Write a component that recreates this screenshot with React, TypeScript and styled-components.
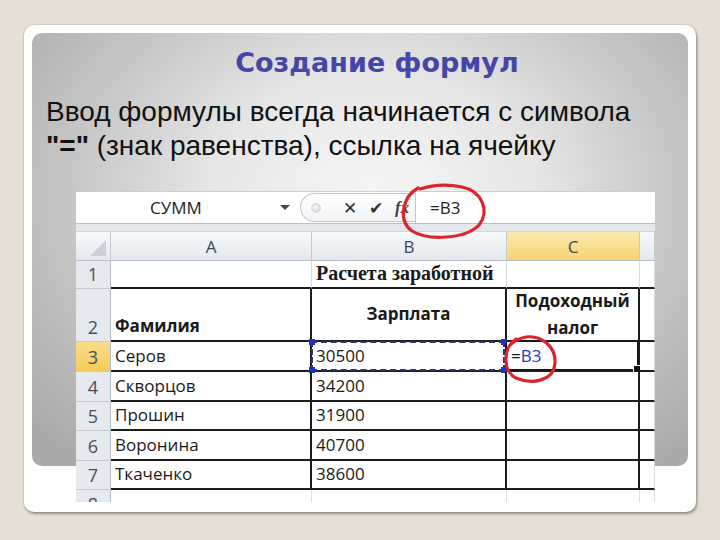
import React from 'react';
import styled, { createGlobalStyle } from 'styled-components';

const GlobalStyle = createGlobalStyle`
  html, body { margin: 0; padding: 0; }
  body {
    background: #e5dfd5;
    width: 720px;
    height: 540px;
    overflow: hidden;
    font-family: "Liberation Sans", Arial, sans-serif;
  }
`;

const Card = styled.div`
  box-sizing: border-box;
  margin: 25px 0 0 24px;
  width: 672px;
  height: 487px;
  padding: 8px;
  background: #ffffff;
  border-radius: 10px;
  box-shadow: 1px 2px 3px rgba(0, 0, 0, 0.35), 0 0 0 1px rgba(0, 0, 0, 0.06);
`;

const Panel = styled.div`
  box-sizing: border-box;
  height: 433px;
  padding: 13px 14px 0 14px;
  border-radius: 10px;
  background: radial-gradient(ellipse 70% 80% at 52% 38%, #f6f6f6 0%, #e6e6e6 35%, #c2c2c2 70%, #a9a9a9 100%);
  display: flex;
  flex-direction: column;
`;

const Title = styled.h1`
  margin: 0;
  padding-left: 34px;
  text-align: center;
  font-family: "DejaVu Sans", Verdana, sans-serif;
  font-weight: bold;
  font-size: 27px;
  line-height: 33px;
  color: #4646a8;
`;

const Lead = styled.p`
  margin: 16px 0 0 0;
  font-family: "Liberation Sans", Arial, sans-serif;
  font-size: 28px;
  line-height: 34px;
  white-space: nowrap;
  color: #111111;
  b { font-weight: bold; }
`;

const Sheet = styled.div`
  position: relative;
  margin: 28px 0 0 30px;
  width: 579px;
  height: 311px;
  background: #ffffff;
  font-family: "Open Sans", "Noto Sans", sans-serif;
  font-size: 17px;
  color: #1a1a1a;
`;

const Clip = styled.div`
  width: 100%;
  height: 100%;
  overflow: hidden;
`;

const FormulaBar = styled.div`
  display: flex;
  height: 33px;
  box-sizing: border-box;
  border-top: 1px solid #c9ced6;
  border-bottom: 1px solid #b9bfc8;
  background: #ffffff;
`;

const NameBox = styled.div`
  position: relative;
  width: 224px;
  display: flex;
  align-items: center;
  justify-content: center;
  padding-right: 24px;
  box-sizing: border-box;
  color: #222;
`;

const DropArrow = styled.span`
  position: absolute;
  right: 10px;
  top: 13px;
  border-left: 5px solid transparent;
  border-right: 5px solid transparent;
  border-top: 5px solid #444;
`;

const Tools = styled.div`
  width: 115px;
  box-sizing: border-box;
  display: flex;
  align-items: center;
  gap: 12px;
  padding-left: 10px;
  border: 1px solid #c3c8d0;
  border-right: none;
  border-radius: 16px 0 0 16px;
  margin: 1px 0;
  background: linear-gradient(#ffffff, #f1f2f4);
  color: #333;
`;

const Knob = styled.span`
  width: 8px;
  height: 8px;
  border-radius: 50%;
  background: radial-gradient(circle at 40% 40%, #fafafa, #c9ccd1);
  border: 1px solid #d4d7dc;
  margin-right: 10px;
`;

const Fx = styled.span`
  font-family: "Liberation Serif", serif;
  font-style: italic;
  font-weight: bold;
  font-size: 17px;
  color: #444;
`;

const FormulaInput = styled.div`
  flex: 1;
  display: flex;
  align-items: center;
  padding-left: 14px;
  border-left: 1px solid #c3c8d0;
  color: #222;
`;

const Strip = styled.div`
  height: 8px;
  background: #e4e7eb;
  border-bottom: 1px solid #cfd4db;
  box-sizing: border-box;
`;

const Grid = styled.div`
  display: grid;
  grid-template-columns: 35px 201px 195px 133px 15px;
  grid-template-rows: 29px 28px 53px 30px 30px 29px 30px 29px 29px;
`;

const HeadCell = styled.div<{ $active?: boolean }>`
  box-sizing: border-box;
  display: flex;
  align-items: center;
  justify-content: center;
  border-right: 1px solid #c5cad2;
  border-bottom: 1px solid #b7bdc6;
  background: ${({ $active }) =>
    $active ? 'linear-gradient(#fbeab0, #f6d46e)' : 'linear-gradient(#f7f8fa, #e4e8ee)'};
  color: #3c4656;
  font-size: 17px;
`;

const Corner = styled(HeadCell)`
  position: relative;
  &::after {
    content: '';
    position: absolute;
    right: 4px;
    bottom: 4px;
    border-left: 16px solid transparent;
    border-bottom: 16px solid #cdd1d7;
  }
`;

const RowNum = styled.div<{ $active?: boolean }>`
  box-sizing: border-box;
  display: flex;
  align-items: flex-end;
  justify-content: center;
  padding-bottom: 2px;
  border-right: 1px solid #b7bdc6;
  border-bottom: 1px solid #c5cad2;
  background: ${({ $active }) => ($active ? 'linear-gradient(#f9dd8a, #f4c95a)' : '#e6e9ee')};
  color: #4a4f57;
  font-size: 18px;
`;

const Cell = styled.div<{
  $right?: boolean;
  $bottom?: boolean;
  $bold?: boolean;
  $center?: boolean;
  $middle?: boolean;
  $serif?: boolean;
}>`
  position: relative;
  box-sizing: border-box;
  display: flex;
  align-items: ${({ $middle }) => ($middle ? 'center' : 'flex-end')};
  justify-content: ${({ $center }) => ($center ? 'center' : 'flex-start')};
  text-align: ${({ $center }) => ($center ? 'center' : 'left')};
  padding: 0 4px 1px 4px;
  border-right: ${({ $right }) => ($right ? '2px solid #1c1c1c' : '1px solid #dadcdf')};
  border-bottom: ${({ $bottom }) => ($bottom ? '2px solid #1c1c1c' : '1px solid #dadcdf')};
  font-weight: ${({ $bold }) => ($bold ? 'bold' : 'normal')};
  font-family: ${({ $serif }) => ($serif ? '"Liberation Serif", "Times New Roman", serif' : 'inherit')};
  font-size: ${({ $serif }) => ($serif ? '20px' : '17px')};
  line-height: 26px;
  white-space: nowrap;
`;

const WrapText = styled.span`
  white-space: normal;
  line-height: 27px;
`;

const Ants = styled.div`
  position: absolute;
  inset: -1px 0 -1px -1px;
  border: 2px dashed #2a3378;
  pointer-events: none;
`;

const Dot = styled.span<{ $x: 'left' | 'right'; $y: 'top' | 'bottom' }>`
  position: absolute;
  ${({ $x }) => $x}: -4px;
  ${({ $y }) => $y}: -4px;
  width: 6px;
  height: 6px;
  background: #2030c0;
`;

const Active = styled.div`
  position: absolute;
  inset: -1px 0 0 -1px;
  border: 1px solid #111;
  pointer-events: none;
`;

const Handle = styled.span`
  position: absolute;
  right: -4px;
  bottom: -4px;
  width: 6px;
  height: 6px;
  background: #111;
  border: 1px solid #fff;
`;

const Ref = styled.span`
  color: #2a32c8;
`;

const Marks = styled.svg`
  position: absolute;
  left: 0;
  top: 0;
  overflow: visible;
  pointer-events: none;
`;

const rows = [
  ['4', 'Скворцов', '34200'],
  ['5', 'Прошин', '31900'],
  ['6', 'Воронина', '40700'],
  ['7', 'Ткаченко', '38600'],
];

export default function App() {
  return (
    <>
      <GlobalStyle />
      <Card>
        <Panel>
          <Title>Создание формул</Title>
          <Lead>
            Ввод формулы всегда начинается с символа
            <br />
            <b>"="</b> (знак равенства), ссылка на ячейку
          </Lead>
          <Sheet>
            <Clip>
              <FormulaBar>
                <NameBox>
                  СУММ
                  <DropArrow />
                </NameBox>
                <Tools>
                  <Knob />
                  <span>✕</span>
                  <span>✔</span>
                  <Fx>fx</Fx>
                </Tools>
                <FormulaInput>=B3</FormulaInput>
              </FormulaBar>
              <Strip />
              <Grid>
                <Corner />
                <HeadCell>A</HeadCell>
                <HeadCell>B</HeadCell>
                <HeadCell $active>C</HeadCell>
                <HeadCell />

                <RowNum>1</RowNum>
                <Cell $bottom />
                <Cell $bottom $bold $serif>
                  Расчета заработной
                </Cell>
                <Cell $bottom />
                <Cell $bottom />

                <RowNum>2</RowNum>
                <Cell $right $bottom $bold>
                  Фамилия
                </Cell>
                <Cell $right $bottom $bold $center $middle>
                  Зарплата
                </Cell>
                <Cell $right $bottom $bold $center $middle>
                  <WrapText>Подоходный налог</WrapText>
                </Cell>
                <Cell $bottom />

                <RowNum $active>3</RowNum>
                <Cell $right $bottom>
                  Серов
                </Cell>
                <Cell $right $bottom>
                  30500
                  <Ants>
                    <Dot $x="left" $y="top" />
                    <Dot $x="left" $y="bottom" />
                    <Dot $x="right" $y="top" />
                    <Dot $x="right" $y="bottom" />
                  </Ants>
                </Cell>
                <Cell $right $bottom>
                  =<Ref>B3</Ref>
                  <Active>
                    <Handle />
                  </Active>
                </Cell>
                <Cell $bottom />

                {rows.map(([n, name, pay]) => (
                  <React.Fragment key={n}>
                    <RowNum>{n}</RowNum>
                    <Cell $right $bottom>
                      {name}
                    </Cell>
                    <Cell $right $bottom>
                      {pay}
                    </Cell>
                    <Cell $right $bottom />
                    <Cell $bottom />
                  </React.Fragment>
                ))}

                <RowNum>8</RowNum>
                <Cell />
                <Cell />
                <Cell />
                <Cell />
              </Grid>
            </Clip>
            <Marks width="579" height="311" viewBox="0 0 579 311">
              <path
                d="M342 -3 C326 6 322 30 336 40 C352 50 390 48 403 34 C414 20 406 0 386 -4 C372 -7 356 -6 344 -2"
                fill="none"
                stroke="#d9262c"
                strokeWidth="3.2"
                strokeLinecap="round"
              />
              <path
                d="M440 148 C427 156 426 180 440 187 C456 194 478 190 479 172 C480 156 466 144 450 146 C444 147 438 150 434 154"
                fill="none"
                stroke="#d9262c"
                strokeWidth="3.2"
                strokeLinecap="round"
              />
            </Marks>
          </Sheet>
        </Panel>
      </Card>
    </>
  );
}
